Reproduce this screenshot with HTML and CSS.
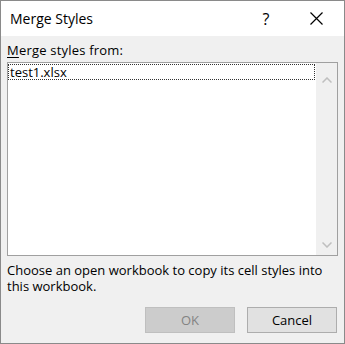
FILE: index.html
```html
<!DOCTYPE html>
<html lang="en">
<head>
    <meta charset="UTF-8">
    <title>Merge Styles</title>
    <link rel="stylesheet" href="styles.css">
</head>
<body>
    <div class="dialog">
        <!-- Title bar -->
        <div class="titlebar">
            <span class="title">Merge Styles</span>
            <span class="help">?</span>
            <span class="close">
                <svg width="13" height="13" viewBox="0 0 13 13">
                    <path d="M0.5 0.5 L12.5 12.5 M12.5 0.5 L0.5 12.5" stroke="#000" stroke-width="1.2" fill="none"/>
                </svg>
            </span>
        </div>

        <div class="content">
            <label class="field-label"><u>M</u>erge styles from:</label>

            <div class="listbox">
                <div class="items">
                    <div class="item focused">test1.xlsx</div>
                </div>
                <div class="scrollbar">
                    <svg width="10" height="6" viewBox="0 0 10 6">
                        <path d="M0.5 5.5 L5 1 L9.5 5.5" stroke="#bfbfbf" stroke-width="1.5" fill="none"/>
                    </svg>
                    <svg width="10" height="6" viewBox="0 0 10 6">
                        <path d="M0.5 0.5 L5 5 L9.5 0.5" stroke="#bfbfbf" stroke-width="1.5" fill="none"/>
                    </svg>
                </div>
            </div>

            <p class="hint">Choose an open workbook to copy its cell styles into<br>this workbook.</p>

            <div class="buttons">
                <button class="btn" disabled>OK</button>
                <button class="btn">Cancel</button>
            </div>
        </div>
    </div>
</body>
</html>
```

FILE: styles.css
```css
* {
    margin: 0;
    padding: 0;
    box-sizing: border-box;
}

body {
    font-family: 'Open Sans', 'Noto Sans', sans-serif;
    font-size: 13px;
    color: #000;
    background: #f0f0f0;
}

.dialog {
    width: 345px;
    height: 344px;
    border: 1px solid #8a8a8a;
    background: #f0f0f0;
    display: flex;
    flex-direction: column;
}

/* Title bar */
.titlebar {
    height: 35px;
    background: #fff;
    display: flex;
    align-items: center;
    padding-left: 9px;
}

.title {
    font-size: 14px;
    flex: 1;
}

.help {
    font-size: 16px;
    width: 46px;
    text-align: center;
    margin-right: 4px;
}

.close {
    width: 46px;
    display: flex;
    justify-content: center;
    margin-right: 5px;
}

/* Body */
.content {
    flex: 1;
    padding: 6px 6px 0 6px;
    display: flex;
    flex-direction: column;
}

.field-label {
    line-height: 16px;
    height: 16px;
    letter-spacing: 0.2px;
}

.field-label u {
    text-underline-offset: 2px;
}

.listbox {
    margin-top: 4px;
    height: 194px;
    border: 1px solid #a0a0a0;
    background: #fff;
    display: flex;
}

.items {
    flex: 1;
    padding-top: 1px;
}

.item {
    height: 16px;
    line-height: 14px;
    padding-left: 1px;
}

.item.focused {
    border: 1px dotted #333;
    margin-right: 1px;
}

.scrollbar {
    width: 21px;
    background: #f0f0f0;
    display: flex;
    flex-direction: column;
    justify-content: space-between;
    align-items: center;
    padding: 14px 0 7px;
}

.hint {
    margin-top: 6px;
    line-height: 16px;
    white-space: nowrap;
}

.buttons {
    margin-top: 13px;
    display: flex;
    justify-content: flex-end;
    gap: 12px;
    padding-right: 1px;
}

.btn {
    width: 90px;
    height: 26px;
    font-family: inherit;
    font-size: 13px;
    background: #e1e1e1;
    border: 1px solid #adadad;
    color: #000;
}

.btn:disabled {
    background: #cccccc;
    border-color: #bfbfbf;
    color: #838383;
}
```
